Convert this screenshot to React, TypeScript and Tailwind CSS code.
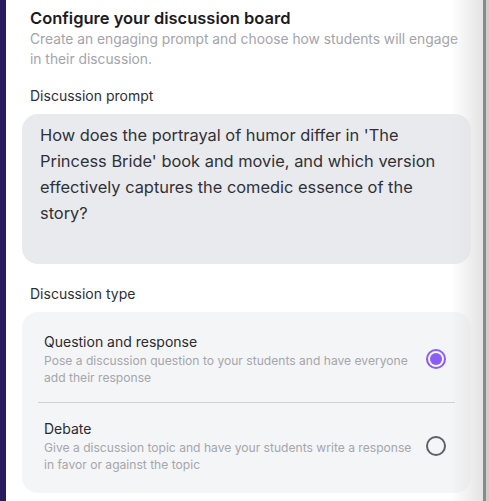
import { useState } from 'react';

const TYPES = [
  {
    id: 'qa',
    title: 'Question and response',
    desc: 'Pose a discussion question to your students and have everyone add their response',
  },
  {
    id: 'debate',
    title: 'Debate',
    desc: 'Give a discussion topic and have your students write a response in favor or against the topic',
  },
];

function Radio({ checked }: { checked: boolean }) {
  if (checked) {
    return (
      <span className="w-[20px] h-[20px] rounded-full border-2 border-[#8b5cf6] flex items-center justify-center shrink-0">
        <span className="w-[12px] h-[12px] rounded-full bg-[#8b5cf6]" />
      </span>
    );
  }
  return <span className="w-[20px] h-[20px] rounded-full border-2 border-[#5f6168] shrink-0" />;
}

export default function App() {
  const [type, setType] = useState('qa');

  return (
    <div className="w-[489px] h-[501px] flex overflow-hidden bg-white font-['Inter','Liberation_Sans',sans-serif]">
      <div className="w-[6px] bg-[#2a1b5c] shrink-0" />
      <div className="relative flex-1 flex flex-col pl-[16px] pr-[11px] pt-[8px]">
        <h1 className="pl-[8px] text-[16.5px] leading-[20px] font-semibold text-[#1c1c1f]">
          Configure your discussion board
        </h1>
        <p className="pl-[8px] mt-[1px] text-[13.8px] leading-[20px] text-[#a3a4a8]">
          Create an engaging prompt and choose how students will engage in their discussion.
        </p>

        <label className="pl-[8px] mt-[17px] text-[14px] leading-[20px] text-[#2e2f33]">Discussion prompt</label>
        <div className="mt-[8px] mr-[1px] h-[150px] rounded-[16px] bg-[#e9eaee] px-[18px] pt-[8px]">
          <p className="text-[16.4px] leading-[26px] text-[#303136]">
            How does the portrayal of humor differ in 'The Princess Bride' book and movie, and which version
            effectively captures the comedic essence of the story?
          </p>
        </div>

        <label className="pl-[8px] mt-[20px] text-[14px] leading-[20px] text-[#2e2f33]">Discussion type</label>
        <div className="mt-[8px] mr-[1px] rounded-[16px] bg-[#f4f5f7] px-[16px] py-[16px]">
          {TYPES.map((t, i) => (
            <div key={t.id}>
              {i > 0 && <div className="h-px bg-[#cfd0d4]" />}
              <button
                type="button"
                onClick={() => setType(t.id)}
                className={`w-full flex items-center gap-[12px] pl-[6px] pr-[9px] text-left ${i === 0 ? 'pt-[4px] pb-[16px]' : 'pt-[16px] pb-[4px]'}`}
              >
                <div className="flex-1">
                  <div className="text-[14px] leading-[20px] text-[#2a2b2f]">{t.title}</div>
                  <div className="text-[12.1px] leading-[17px] text-[#a5a6ab]">{t.desc}</div>
                </div>
                <Radio checked={type === t.id} />
              </button>
            </div>
          ))}
        </div>

        <div className="pointer-events-none absolute top-0 right-0 bottom-0 w-[32px] bg-gradient-to-r from-white/0 to-[#e4e4e4]" />
      </div>
      <div className="w-[3px] bg-[#8a8a8a] shrink-0" />
      <div className="w-[3px] bg-[#cdcdcd] shrink-0" />
    </div>
  );
}
